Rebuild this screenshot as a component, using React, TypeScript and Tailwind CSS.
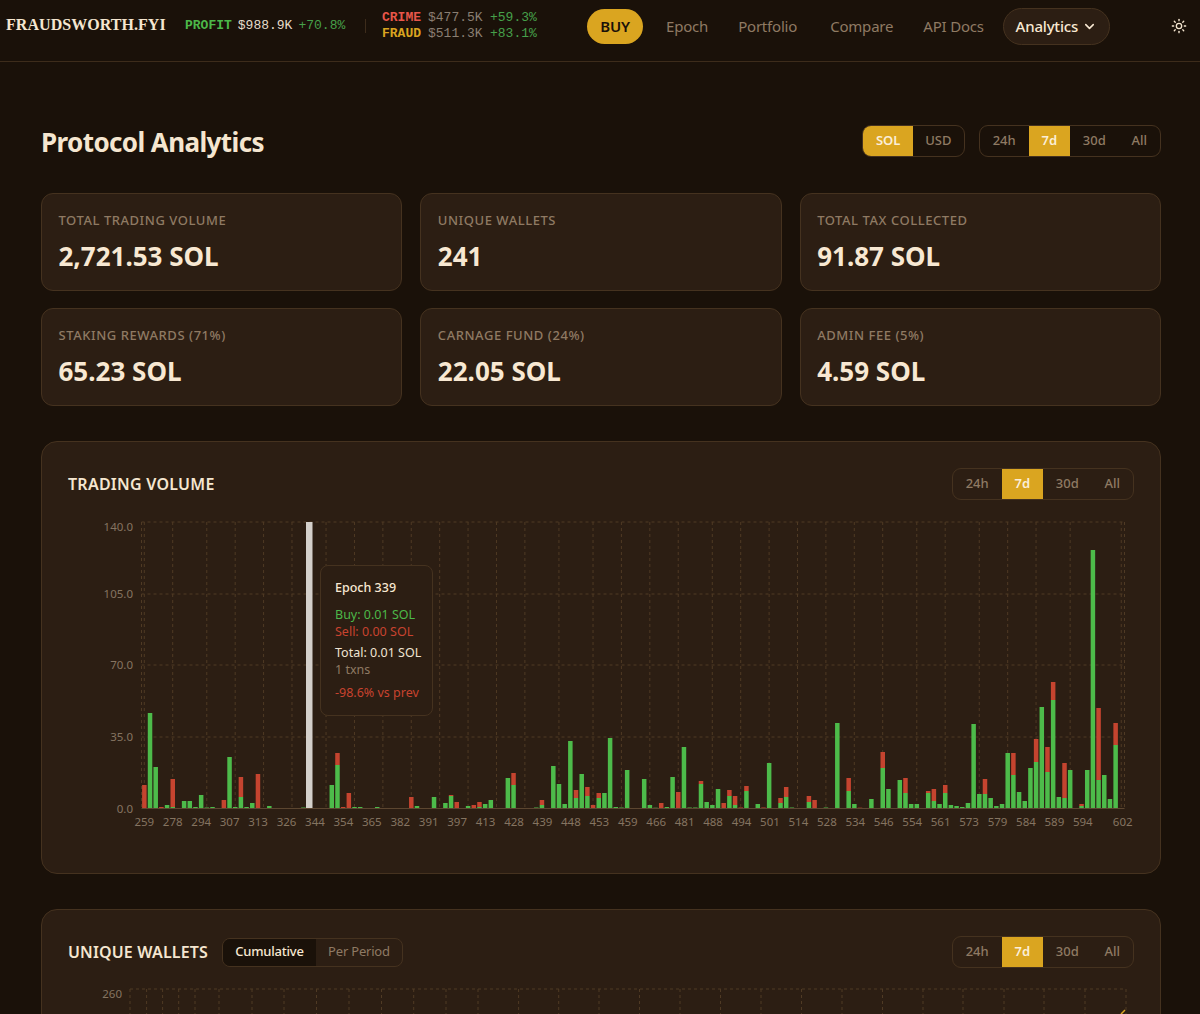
import { ChevronDown, Sun } from "lucide-react";

const SANS = "font-['Noto_Sans',sans-serif]";
const MONO = "font-['Liberation_Mono',monospace]";

// bar index -> [buy px, total px]; measured off the chart, everything else is empty
const BARS: Record<number, [number, number]> = {
  0: [0, 23], 1: [95, 95], 2: [41, 41], 3: [0, 1], 4: [3, 3], 5: [1, 29], 7: [7, 7], 8: [7, 7], 9: [1, 1], 10: [13, 13],
  11: [0.5, 0.5], 12: [1, 1], 14: [0, 8], 15: [51, 51], 16: [1, 1], 17: [11, 31], 18: [1, 1], 19: [5, 5], 20: [0, 34], 22: [2, 2],
  28: [0.5, 0.5], 33: [23, 23], 34: [43, 55], 35: [0, 1], 36: [0, 15], 37: [1, 1], 38: [1, 1], 41: [1, 1], 47: [0, 11], 48: [2, 2],
  51: [11, 11], 53: [5, 5], 54: [12, 13], 55: [0, 6], 57: [2, 2], 58: [0, 3], 59: [1, 6], 60: [4, 4], 61: [8, 8], 64: [30, 30],
  65: [23, 35], 69: [0.5, 0.5], 70: [3, 8], 72: [42, 42], 73: [24, 24], 74: [4, 4], 75: [67, 67], 76: [10, 18], 77: [34, 34], 78: [12, 21],
  79: [0, 3], 80: [10, 15], 81: [15, 15], 82: [70, 70], 83: [1, 1], 84: [0.5, 0.5], 85: [38, 38], 88: [29, 29], 89: [3, 3], 90: [0.3, 0.3],
  91: [0, 5], 92: [1, 1], 93: [31, 31], 94: [0, 16], 95: [61, 61], 96: [0.5, 0.5], 97: [0.5, 0.5], 98: [24, 27], 99: [6, 6], 100: [3, 3],
  101: [19, 19], 102: [0, 5], 103: [12, 18], 104: [3, 12], 105: [0, 0.5], 106: [17, 22], 108: [4, 4], 109: [0, 0.5], 110: [45, 45], 112: [5, 10],
  113: [11, 21], 114: [0.5, 0.5], 117: [6, 12], 118: [0, 8], 120: [0.5, 0.5], 122: [85, 85], 124: [17, 30], 125: [4, 4], 126: [0, 0.3], 128: [9, 9],
  130: [40, 56], 131: [19, 19], 133: [28, 28], 134: [15, 30], 135: [4, 4], 136: [4, 4], 138: [15, 17], 139: [7, 19], 140: [4, 4], 141: [15, 23],
  142: [3, 3], 143: [2, 2], 144: [1, 1], 145: [5, 5], 146: [84, 84], 147: [14, 14], 148: [14, 29], 149: [10, 10], 150: [2, 2], 151: [4, 4],
  152: [55, 55], 153: [33, 55], 154: [16, 16], 155: [7, 7], 156: [40, 40], 157: [46, 69], 158: [101, 101], 159: [36, 61], 160: [108, 126], 161: [11, 11],
  162: [10, 45], 163: [38, 38], 165: [2, 4], 166: [38, 38], 167: [258, 258], 168: [28, 100], 169: [33, 33], 170: [9, 9], 171: [63, 85],
};

const EPOCHS = [259, 278, 294, 307, 313, 326, 344, 354, 365, 382, 391, 397, 413, 428, 439, 448, 453, 459, 466, 481, 488, 494, 501, 514, 528, 534, 546, 554, 561, 573, 579, 584, 589, 594];
const GRID_X = [0, 5, 11, 16, 21, 26, 32, 37, 42, 47, 52, 57, 62, 67, 73, 79, 84, 89, 94, 100, 105, 110, 115, 120, 125, 130, 136, 141, 147, 152, 157, 163, 172];
const LEFT = 141.5;
const STEP = 5.68;
const BASE = 808;
const AXIS_TEXT = "#857461";
const WALLET_X = [130, 146.6, 162.6, 178.7, 195, 219, 252, 284, 316.5, 349, 381.5, 413.7, 446, 478, 518.6, 558.7, 599, 639.5, 680, 720.5, 761, 801.5, 842, 882.5, 923, 963, 1004, 1044, 1085, 1126];

function Toggle({ items, active, onCard, tight }: { items: string[]; active: string; onCard?: boolean; tight?: boolean }) {
  return (
    <div className={`flex h-[32px] overflow-hidden rounded-[9px] border border-[#45321f] ${onCard ? "bg-[#2c1e13]" : "bg-[#1a1109]"}`}>
      {items.map(item => (
        <span
          key={item}
          className={`flex items-center text-[13px] ${tight ? "px-[12.4px]" : "px-[12.9px]"} ${item === active ? "bg-[#daa520] font-semibold text-[#fbeed8]" : "font-medium text-[#8f7a63]"}`}
        >
          {item}
        </span>
      ))}
    </div>
  );
}

function StatCard({ label, value }: { label: string; value: string }) {
  return (
    <div className="h-[98px] rounded-[12px] border border-[#45321f] bg-[#2c1e13] px-[16.5px] pt-[16px]">
      <div className="text-[13px] font-medium leading-[20px] tracking-[0.55px] text-[#8f7a63]">{label}</div>
      <div className="mt-[8px] text-[26px] font-bold leading-[36px] text-[#f8e8d2]">{value}</div>
    </div>
  );
}

function VolumeChart() {
  const ticks = [
    { label: "140.0", y: 522, ty: 531 },
    { label: "105.0", y: 594, ty: 598 },
    { label: "70.0", y: 665, ty: 669 },
    { label: "35.0", y: 737, ty: 741 },
    { label: "0.0", y: 808, ty: 813 },
  ];
  return (
    <svg className="block h-[320px] w-[1066px]" viewBox="68 515 1066 320">
      {ticks.slice(0, 4).map(t => (
        <line key={t.label} x1={LEFT} x2={1124.5} y1={t.y} y2={t.y} stroke="#4f3a24" strokeDasharray="3 3" />
      ))}
      {GRID_X.map(i => (
        <line key={i} x1={LEFT + STEP * i + 2.8} x2={LEFT + STEP * i + 2.8} y1={522} y2={BASE} stroke="#4f3a24" strokeDasharray="3 3" />
      ))}
      <line x1={LEFT} x2={LEFT} y1={522} y2={BASE} stroke="#4f3a24" strokeDasharray="3 3" />
      <line x1={1124.5} x2={1124.5} y1={522} y2={BASE} stroke="#4f3a24" strokeDasharray="3 3" />
      <rect x={306} y={522} width={6.5} height={286} fill="#d4d0cb" />
      {Object.entries(BARS).map(([k, [buy, total]]) => {
        const x = LEFT + STEP * Number(k) + 0.6;
        return (
          <g key={k}>
            <rect x={x} y={BASE - total} width={4.5} height={total - buy} fill="#c5442f" />
            <rect x={x} y={BASE - buy} width={4.5} height={buy} fill="#4dbb4a" />
          </g>
        );
      })}
      <line x1={LEFT} x2={1124.5} y1={BASE + 0.5} y2={BASE + 0.5} stroke="#5c4630" />
      {ticks.map(t => (
        <text key={t.label} x={133} y={t.ty} textAnchor="end" fontSize={11.5} fill={AXIS_TEXT}>{t.label}</text>
      ))}
      {EPOCHS.map((e, i) => (
        <text key={e} x={144.3 + i * 28.44} y={826} textAnchor="middle" fontSize={11.5} fill={AXIS_TEXT}>{e}</text>
      ))}
      <text x={1122.7} y={826} textAnchor="middle" fontSize={11.5} fill={AXIS_TEXT}>602</text>
    </svg>
  );
}

function WalletsChart() {
  return (
    <svg className="block h-[40px] w-[1066px]" viewBox="68 983 1066 40">
      <line x1={130} x2={1126} y1={989} y2={989} stroke="#4f3a24" strokeDasharray="3 3" />
      {WALLET_X.map(x => (
        <line key={x} x1={x} x2={x} y1={989} y2={1023} stroke="#4f3a24" strokeDasharray="3 3" />
      ))}
      <text x={122} y={998} textAnchor="end" fontSize={11.5} fill={AXIS_TEXT}>260</text>
      <line x1={1121} x2={1125} y1={1014} y2={1010} stroke="#daa520" strokeWidth={1.5} />
    </svg>
  );
}

function Tooltip() {
  return (
    <div className="absolute left-[252px] top-[50px] h-[151px] w-[113px] rounded-[8px] border border-[#45321f] bg-[#2c1e13] pl-[14px] pt-[13px] text-[12.5px] leading-[17px]">
      <div className="font-medium text-[#f8e8d2]">Epoch 339</div>
      <div className="mt-[10px] text-[#4cb849]">Buy: 0.01 SOL</div>
      <div className="text-[#c8432f]">Sell: 0.00 SOL</div>
      <div className="mt-[4px] text-[#f0e4d2]">Total: 0.01 SOL</div>
      <div className="text-[#8f7a63]">1 txns</div>
      <div className="mt-[6px] text-[#c8432f]">-98.6% vs prev</div>
    </div>
  );
}

export default function App() {
  const ranges = ["24h", "7d", "30d", "All"];
  return (
    <div className={`${SANS} h-[1014px] w-[1200px] overflow-hidden bg-[#1a1109]`}>
      {/* Header */}
      <header className="flex h-[62px] items-center border-b border-[#3d2c1b] pb-[9px] pl-[6px]">
        <span className="-mt-[2px] w-[179px] font-['Liberation_Serif',serif] text-[16px] font-bold leading-none tracking-[0.05px] text-[#f5e6d0]">FRAUDSWORTH.FYI</span>
        <div className={`${MONO} flex w-[180px] gap-[6px] text-[13px]`}>
          <span className="font-bold text-[#4cb849]">PROFIT</span>
          <span className="text-[#e6dccb]">$988.9K</span>
          <span className="text-[#46a04a]">+70.8%</span>
        </div>
        <div className="h-[14px] w-px bg-[#3d2c1b]" />
        <div className={`${MONO} ml-[16px] grid grid-cols-[40px_56px_48px] gap-x-[6px] text-[13px] leading-[16px]`}>
          <span className="font-bold text-[#e8564a]">CRIME</span>
          <span className="text-[#8a7f72]">$477.5K</span>
          <span className="text-[#46a04a]">+59.3%</span>
          <span className="font-bold text-[#daa520]">FRAUD</span>
          <span className="text-[#8a7f72]">$511.3K</span>
          <span className="text-[#46a04a]">+83.1%</span>
        </div>
        <nav className="ml-[49px] flex items-center text-[15px] tracking-[-0.2px] text-[#8f7a63]">
          <span className="flex h-[35px] w-[56px] items-center justify-center rounded-full bg-[#daa520] font-semibold text-[#1a1109]">BUY</span>
          <span className="ml-[23px]">Epoch</span>
          <span className="ml-[30px]">Portfolio</span>
          <span className="ml-[33px]">Compare</span>
          <span className="ml-[30px]">API Docs</span>
          <span className="ml-[19px] flex h-[37px] w-[107px] items-center justify-center gap-[4px] rounded-full border border-[#45321f] bg-[#2c1e13] font-medium text-[#f8e8d2]">
            Analytics
            <ChevronDown size={15} strokeWidth={2.5} />
          </span>
        </nav>
        <Sun size={16} className="ml-[61px] text-[#f5e6d0]" />
      </header>

      <main className="ml-[41px] w-[1120px]">
        <div className="flex h-[131px] items-center pt-[30px]">
          <h1 className="text-[26px] font-bold tracking-[-0.6px] text-[#f5e6d0]">Protocol Analytics</h1>
          <div className="ml-auto -mt-[3px] flex gap-[14px]">
            <Toggle items={["SOL", "USD"]} active="SOL" tight />
            <Toggle items={ranges} active="7d" />
          </div>
        </div>

        <div className="grid grid-cols-3 gap-x-[18px] gap-y-[17px]">
          <StatCard label="TOTAL TRADING VOLUME" value="2,721.53 SOL" />
          <StatCard label="UNIQUE WALLETS" value="241" />
          <StatCard label="TOTAL TAX COLLECTED" value="91.87 SOL" />
          <StatCard label="STAKING REWARDS (71%)" value="65.23 SOL" />
          <StatCard label="CARNAGE FUND (24%)" value="22.05 SOL" />
          <StatCard label="ADMIN FEE (5%)" value="4.59 SOL" />
        </div>

        {/* Trading volume */}
        <section className="mt-[35px] h-[433px] rounded-[16px] border border-[#45321f] bg-[#2c1e13] px-[26px] pt-[26px]">
          <div className="flex h-[32px] items-center justify-between">
            <h2 className="text-[16px] font-semibold tracking-[0.25px] text-[#f5e6d0]">TRADING VOLUME</h2>
            <Toggle items={ranges} active="7d" onCard />
          </div>
          <div className="relative mt-[15px]">
            <VolumeChart />
            <Tooltip />
          </div>
        </section>

        {/* Unique wallets, cut off by the viewport */}
        <section className="mt-[35px] h-[433px] rounded-[16px] border border-[#45321f] bg-[#2c1e13] px-[26px] pt-[26px]">
          <div className="flex h-[32px] items-center">
            <h2 className="text-[16px] font-semibold tracking-[0.15px] text-[#f5e6d0]">UNIQUE WALLETS</h2>
            <div className="ml-[14px] flex h-[29px] overflow-hidden rounded-[8px] border border-[#45321f] text-[13px]">
              <span className="flex w-[93px] items-center justify-center bg-[#1a1109] font-medium tracking-[-0.2px] text-[#f8e8d2]">Cumulative</span>
              <span className="flex w-[86px] items-center justify-center tracking-[-0.2px] text-[#8f7a63]">Per Period</span>
            </div>
            <div className="ml-auto">
              <Toggle items={ranges} active="7d" onCard />
            </div>
          </div>
          <div className="mt-[15px]">
            <WalletsChart />
          </div>
        </section>
      </main>
    </div>
  );
}
